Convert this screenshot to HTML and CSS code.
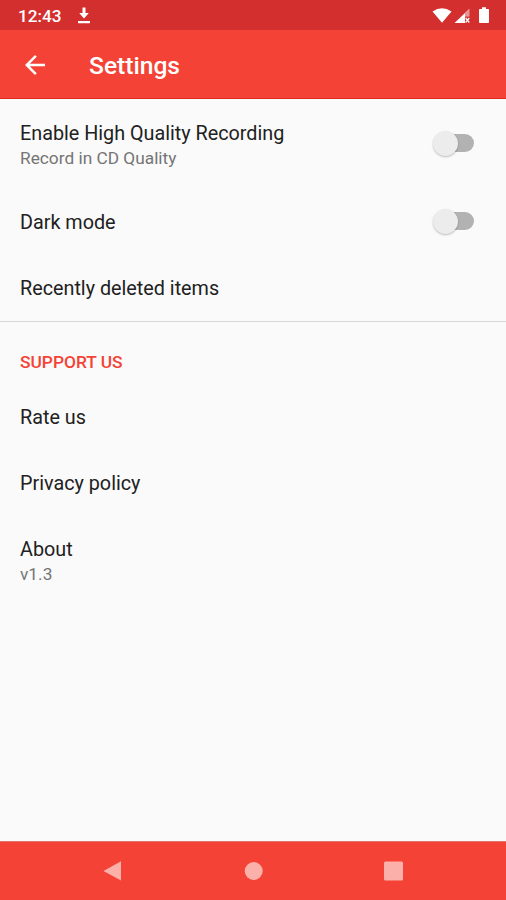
FILE: index.html
```html
<!DOCTYPE html>
<html lang="en">
<head>
<meta charset="utf-8">
<title>Settings</title>
<link rel="stylesheet" href="styles.css">
</head>
<body>
<div class="screen">
  <div class="status-bar">
    <span class="clock">12:43</span>
    <svg class="download" width="14" height="18" viewBox="0 0 14 18"><path d="M5.500 .5h3v5.500h3.300L7 11.500 2.200 6h3.300zM1 14h12v2.300H1z" fill="#fff"/></svg>
    <svg class="indicators" width="60" height="20" viewBox="0 0 60 20">
      <path d="M1.500 5.400Q11-.8 20.500 5.400L11 16.800z" fill="#fff"/>
      <path d="M38 3.200v7h-4v6.700H23.500z" fill="#fff"/>
      <path d="M38.500 2.700v7.500H34V7.200z" fill="#e99595"/>
      <path d="M34.600 12l3.700 4.500M38.300 12l-3.700 4.500" stroke="#fff" stroke-width="1.200"/>
      <path d="M48.800 3h2.200V1.200h4V3h2.200q.8 0 .8.800v12.400q0 .8-.8.800h-8.400q-.8 0-.8-.8V3.800q0-.8.800-.8z" fill="#fff"/>
    </svg>
  </div>
  <header class="toolbar">
    <svg class="back" width="30" height="30" viewBox="0 0 24 24"><path d="M20 11H7.830l5.590-5.590L12 4l-8 8 8 8 1.410-1.410L7.830 13H20z" fill="#fff"/></svg>
    <h1>Settings</h1>
  </header>
  <main class="content">
    <div class="row row-switch">
      <div class="label"><div class="title">Enable High Quality Recording</div><div class="summary">Record in CD Quality</div></div>
      <div class="switch"></div>
    </div>
    <div class="row"><div class="title">Dark mode</div><div class="switch"></div></div>
    <div class="row"><div class="title">Recently deleted items</div></div>
    <h2 class="category">SUPPORT US</h2>
    <div class="row"><div class="title">Rate us</div></div>
    <div class="row"><div class="title">Privacy policy</div></div>
    <div class="row row-about">
      <div class="label"><div class="title">About</div><div class="summary">v1.3</div></div>
    </div>
  </main>
  <nav class="nav-bar">
    <svg width="20" height="22" viewBox="0 0 20 22"><path d="M18 1.300v19.200L.5 11z" fill="#fbb0aa"/></svg>
    <svg width="20" height="22" viewBox="0 0 20 22"><circle cx="9.700" cy="11" r="9" fill="#fbb0aa"/></svg>
    <svg width="20" height="22" viewBox="0 0 20 22"><rect x="0" y="1.500" width="19" height="19" rx="1.500" fill="#fbb0aa"/></svg>
  </nav>
</div>
</body>
</html>
```

FILE: styles.css
```css
* { box-sizing: border-box; }
body { margin: 0; font-family: Roboto, sans-serif; }
.screen { width: 506px; height: 900px; display: flex; flex-direction: column; background: #fafafa; overflow: hidden; }
.status-bar { height: 30px; flex: none; display: flex; align-items: center; padding: 2px 15px 0 18px; background: #d32f2f; color: #fff; }
.clock { width: 59px; font-size: 17.2px; font-weight: 500; }
.download { display: block; }
.indicators { display: block; margin-left: auto; }
.toolbar { height: 69px; flex: none; display: flex; align-items: center; padding-left: 20px; background: #f44336; border-bottom: 1px solid #dc2a1c; color: #fff; }
.back { margin-top: 1px; }
.toolbar h1 { margin: 3px 0 0 39px; font-size: 24.6px; line-height: 30px; font-weight: 500; }
.content { flex: 1; }
.row { height: 66px; display: flex; align-items: center; justify-content: space-between; padding: 0 31px 0 20px; }
.row-switch { height: 90px; }
.row-switch .label { padding-top: 4px; }
.row-about { height: 91px; }
.title { font-size: 19.77px; line-height: 25px; color: #212121; }
.summary { font-size: 17.3px; line-height: 25px; color: #757575; }
.switch { position: relative; width: 40px; height: 26px; padding: 3px 0 0 8px; }
.switch::before { content: ""; display: block; width: 31px; height: 18px; border-radius: 9px; background: #b2b2b2; }
.switch::after { content: ""; position: absolute; left: -2px; top: 0; width: 25px; height: 25px; border-radius: 50%; background: #ececec; box-shadow: 0 1px 2px rgba(0, 0, 0, .25); }
.category { height: 63px; margin: 0; padding: 29px 20px 0; border-top: 1px solid #d9d9d9; font-size: 17.35px; line-height: 22px; font-weight: 500; color: #f44336; }
.nav-bar { height: 59px; flex: none; display: flex; align-items: center; justify-content: space-between; padding: 0 102px 0 103px; background: #f44336; border-top: 1px solid #e0786f; }
```
